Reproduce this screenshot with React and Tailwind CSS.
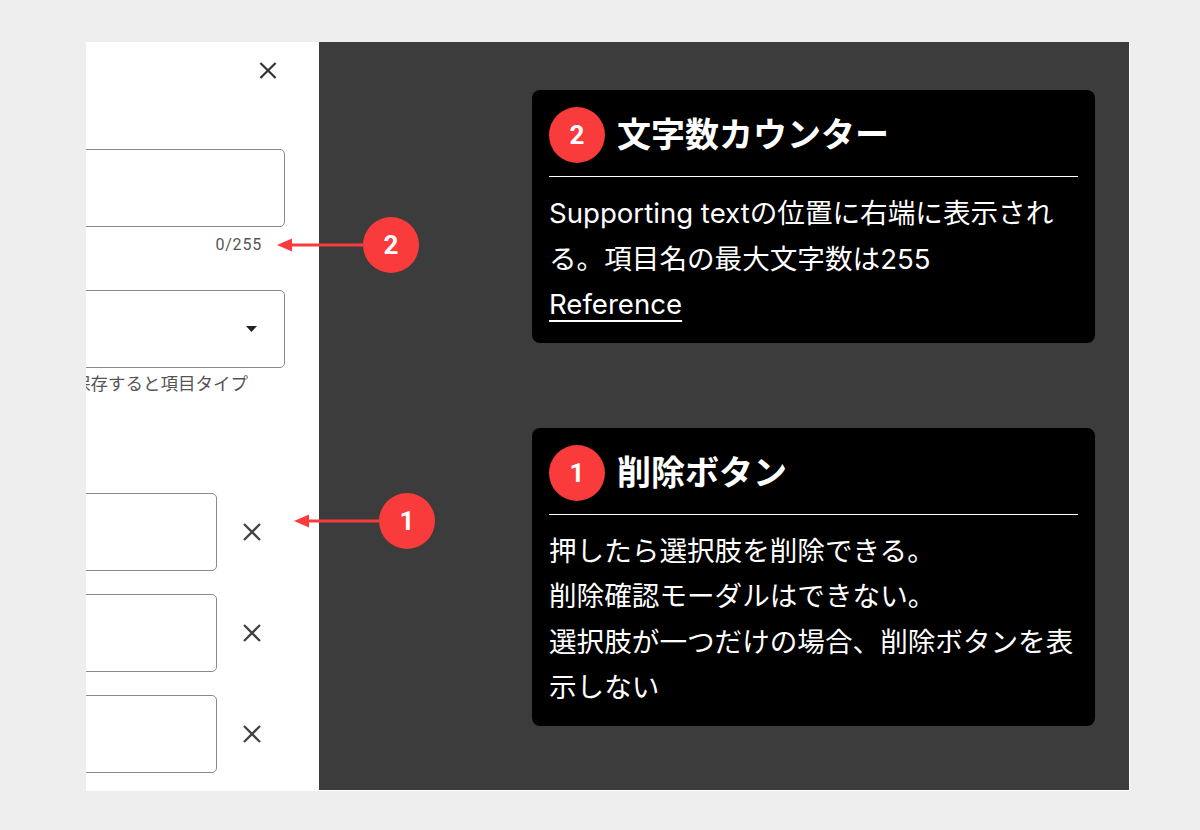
import React from 'react'

const XIcon = ({ className }) => (
  <svg viewBox="0 0 20 20" className={className} fill="none" stroke="currentColor" strokeWidth="2.3">
    <path d="M2 2L18 18M18 2L2 18" />
  </svg>
)

const Badge = ({ n, className = '' }) => (
  <div
    className={`flex h-[56px] w-[56px] shrink-0 items-center justify-center rounded-full bg-[#fa3b3b] text-[26px] font-bold leading-none text-white ${className}`}
  >
    {n}
  </div>
)

const Arrow = ({ className }) => (
  <svg viewBox="0 0 86 14" className={className}>
    <polygon points="0,7 15,0.5 15,13.5" fill="#fa3b3b" />
    <rect x="13" y="5.5" width="73" height="3" fill="#fa3b3b" />
  </svg>
)

const Card = ({ n, title, children }) => (
  <div className="w-[563px] rounded-[8px] bg-black px-[17px] pt-[17px] pb-[15px] text-white">
    <div className="flex items-center gap-[12px]">
      <Badge n={n} />
      <h2 className="text-[34px] font-bold leading-[40px]">{title}</h2>
    </div>
    <div className="mt-[13px] h-px bg-white" />
    <div className="mt-[14px] font-[Inter,'Noto_Sans_CJK_JP',sans-serif] text-[27.6px] leading-[45.5px]">{children}</div>
  </div>
)

const OptionRow = () => (
  <div className="flex items-center">
    <div className="h-[78px] flex-1 rounded-[5px] border border-[#8a8a8a]" />
    <XIcon className="ml-[25px] mr-[23px] h-[20px] w-[20px] shrink-0 text-[#444]" />
  </div>
)

export default function App() {
  return (
    <div className="min-h-[830px] w-[1200px] bg-[#eeeeee] pl-[86px] pt-[42px] font-[Roboto,'Noto_Sans_CJK_JP',sans-serif]">
      <div className="relative flex h-[749px] w-[1044px]">
        {/* left: edit panel (clipped) */}
        <div className="w-[233px] shrink-0 overflow-hidden bg-white">
          <div className="-ml-[13px] pr-[34px]">
            <div className="flex h-[56px] items-center justify-end">
              <XIcon className="mr-[7px] h-[19px] w-[20px] text-[#333]" />
            </div>

            <div className="mt-[51px] h-[78px] rounded-[5px] border border-[#8a8a8a]" />
            <p className="mt-[8px] pr-[23px] text-right text-[16px] leading-[20px] tracking-[0.05em] text-[#555]">0/255</p>

            <div className="mt-[35px] flex h-[78px] items-center justify-end rounded-[5px] border border-[#8a8a8a] pr-[27px]">
              <svg viewBox="0 0 11 6" className="h-[6px] w-[11px]">
                <polygon points="0,0 11,0 5.5,6" fill="#222" />
              </svg>
            </div>
            <p className="mt-[6px] whitespace-nowrap text-[17.5px] leading-[20px] text-[#555]">保存すると項目タイプ</p>

            <div className="mt-[99px] flex flex-col gap-[23px]">
              <OptionRow />
              <OptionRow />
              <OptionRow />
            </div>
          </div>
        </div>

        {/* right: notes */}
        <div className="flex flex-1 flex-col gap-[85px] border-r border-b border-white bg-[#3c3c3c] pl-[213px] pt-[48px]">
          <Card n="2" title="文字数カウンター">
            <p>
              Supporting textの位置に右端に表示され
              <br />
              る。項目名の最大文字数は255
            </p>
            <p className="underline decoration-[1.5px] underline-offset-[6px]">Reference</p>
          </Card>
          <Card n="1" title="削除ボタン">
            <p>押したら選択肢を削除できる。</p>
            <p>削除確認モーダルはできない。</p>
            <p>選択肢が一つだけの場合、削除ボタンを表示しない</p>
          </Card>
        </div>

        {/* annotations */}
        <Arrow className="absolute left-[191px] top-[196px] h-[14px] w-[86px]" />
        <Badge n="2" className="absolute left-[277px] top-[175px]" />
        <Arrow className="absolute left-[208px] top-[472px] h-[14px] w-[86px]" />
        <Badge n="1" className="absolute left-[293px] top-[451px]" />
      </div>
    </div>
  )
}
